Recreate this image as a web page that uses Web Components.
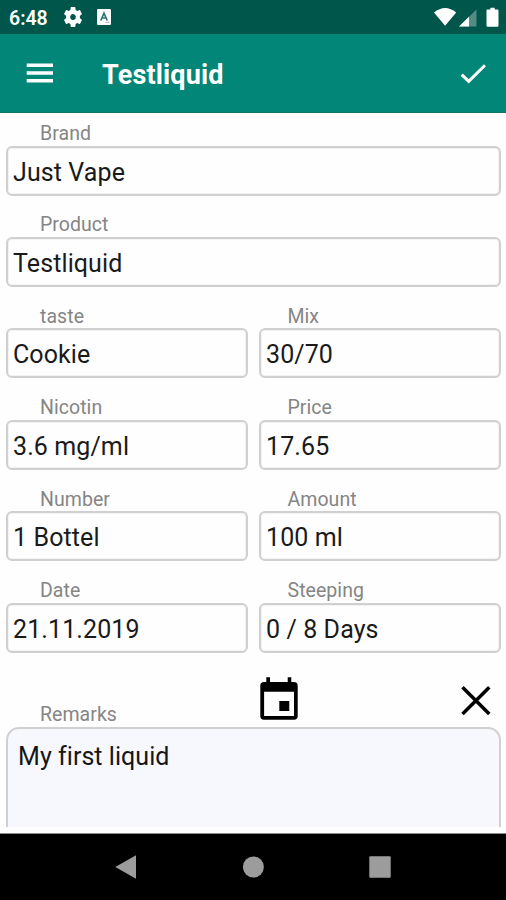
<!DOCTYPE html>
<html lang="en">
<head>
<meta charset="utf-8">
<title>Testliquid</title>
<style>
html, body {
  margin: 0;
  height: 100%;
  overflow: hidden;
  background: #fefefe;
}
body {
  font-family: Roboto, "Noto Sans", sans-serif;
}
</style>
</head>
<body>
<liquid-screen>
  <status-bar slot="top" time="6:48"></status-bar>
  <app-bar slot="top">Testliquid</app-bar>

  <liquid-field class="wide" label="Brand">Just Vape</liquid-field>
  <liquid-field class="wide" label="Product">Testliquid</liquid-field>
  <liquid-field label="taste">Cookie</liquid-field>
  <liquid-field class="right" label="Mix">30/70</liquid-field>
  <liquid-field label="Nicotin">3.6 mg/ml</liquid-field>
  <liquid-field class="right" label="Price">17.65</liquid-field>
  <liquid-field label="Number">1 Bottel</liquid-field>
  <liquid-field class="right" label="Amount">100 ml</liquid-field>
  <liquid-field label="Date">21.11.2019</liquid-field>
  <liquid-field class="right" label="Steeping">0 / 8 Days</liquid-field>

  <remarks-area slot="remarks" label="Remarks">My first liquid</remarks-area>
  <nav-bar slot="bottom"></nav-bar>
</liquid-screen>

<script>
/**
 * Creates a template element from markup.
 */
const createTemplate = (html) => {
  const template = document.createElement('template')
  template.innerHTML = html
  return template
}

const screenTemplate = createTemplate(`
<style>
:host {
  display: flex;
  flex-direction: column;
  width: 506px;
  height: 900px;
  overflow: hidden;
}
.fields {
  display: grid;
  grid-template-columns: 242px 242px;
  grid-auto-rows: 91.4px;
  column-gap: 11px;
  height: 554px;
  padding: 0 5px 0 6px;
  flex: none;
}
::slotted(.wide) {
  grid-column: span 2;
}
::slotted(.right) {
  --label-indent: 28.5px;
}
</style>
<slot name="top"></slot>
<div class="fields"><slot></slot></div>
<slot name="remarks"></slot>
<slot name="bottom"></slot>
`)

customElements.define('liquid-screen',
  class extends HTMLElement {
    constructor () {
      super()

      this.attachShadow({ mode: 'open' })
        .appendChild(screenTemplate.content.cloneNode(true))
    }
  })

const statusTemplate = createTemplate(`
<style>
:host {
  display: flex;
  align-items: center;
  flex: none;
  box-sizing: border-box;
  height: 34px;
  padding: 0 7px 0 9px;
  background: #00564b;
  color: #fff;
}
.time {
  width: 55px;
  font-size: 19.5px;
  font-weight: 600;
  line-height: 34px;
  padding-top: 3px;
}
svg {
  display: block;
  fill: currentColor;
}
.gear {
  margin-right: 15px;
}
.signals {
  margin-left: auto;
}
</style>
<span class="time"></span>
<svg class="gear" width="18" height="20" viewBox="2.2 2 19.6 20" preserveAspectRatio="none"><path d="M19.43 12.98c.04-.32.07-.64.07-.98s-.03-.66-.07-.98l2.11-1.65c.19-.15.24-.42.12-.64l-2-3.46c-.12-.22-.39-.3-.61-.22l-2.49 1c-.52-.4-1.08-.73-1.69-.98l-.38-2.65C14.46 2.18 14.25 2 14 2h-4c-.25 0-.46.18-.49.42l-.38 2.65c-.61.25-1.17.59-1.69.98l-2.49-1c-.23-.09-.49 0-.61.22l-2 3.46c-.13.22-.07.49.12.64l2.11 1.65c-.04.32-.07.65-.07.98s.03.66.07.98l-2.11 1.65c-.19.15-.24.42-.12.64l2 3.46c.12.22.39.3.61.22l2.49-1c.52.4 1.08.73 1.69.98l.38 2.65c.03.24.24.42.49.42h4c.25 0 .46-.18.49-.42l.38-2.65c.61-.25 1.17-.59 1.69-.98l2.49 1c.23.09.49 0 .61-.22l2-3.46c.12-.22.07-.49-.12-.64l-2.11-1.65zM12 15.1c-1.7 0-3.1-1.4-3.1-3.1s1.4-3.1 3.1-3.1 3.1 1.4 3.1 3.1-1.4 3.1-3.1 3.1z"/></svg>
<svg width="14" height="16" viewBox="0 0 14 16">
  <rect width="14" height="16" rx="1.2"/>
  <path d="M3.8 11.5 7 4.2l3.2 7.3M5 9h4" fill="none" stroke="#31766e" stroke-width="1.7"/>
  <path d="M8.5 13.3h4" stroke="#8db4af"/>
</svg>
<svg class="signals" width="66" height="34" viewBox="433 0 66 34">
  <path d="M434 12.6Q445.1 3.4 456.2 12.6L445.1 25.7z"/>
  <path d="M476.5 9.5V26.6H459z" opacity=".32"/>
  <path d="M469 16.8V26.6H459z"/>
  <path d="M487.5 9.5h2.8V7.8h4.4v1.7h2.8q1 0 1 1V25.8q0 1-1 1h-10q-1 0-1-1V10.5q0-1 1-1z"/>
</svg>
`)

customElements.define('status-bar',
  class extends HTMLElement {
    constructor () {
      super()

      this.attachShadow({ mode: 'open' })
        .appendChild(statusTemplate.content.cloneNode(true))
      this.shadowRoot.querySelector('.time').textContent = this.getAttribute('time')
    }
  })

const appBarTemplate = createTemplate(`
<style>
:host {
  display: flex;
  align-items: center;
  flex: none;
  box-sizing: border-box;
  height: 79px;
  padding: 0 20px 0 26px;
  background: #028677;
  border-bottom: 1px solid #167266;
  color: #fff;
}
.title {
  flex: 1;
  margin-left: 48px;
  padding-top: 4px;
  font-size: 27px;
  font-weight: 700;
  line-height: 32px;
  letter-spacing: .15px;
}
svg {
  display: block;
}
</style>
<svg width="28" height="22" viewBox="0 0 28 22"><path d="M.7 3.2H27M.7 10.9H27M.7 18.7H27" stroke="#fff" stroke-width="3.5"/></svg>
<div class="title"><slot></slot></div>
<svg width="26" height="22" viewBox="460 62 26 22"><path d="M461.7 74.6 468.7 81.4 485 65.2" fill="none" stroke="#fff" stroke-width="3"/></svg>
`)

customElements.define('app-bar',
  class extends HTMLElement {
    constructor () {
      super()

      this.attachShadow({ mode: 'open' })
        .appendChild(appBarTemplate.content.cloneNode(true))
    }
  })

const fieldTemplate = createTemplate(`
<style>
:host {
  display: block;
}
.label {
  height: 32.7px;
  padding-left: var(--label-indent, 34px);
  box-sizing: border-box;
  padding-top: 9px;
  font-size: 19.5px;
  line-height: 24px;
  letter-spacing: .05px;
  color: #858585;
}
.box {
  box-sizing: border-box;
  height: 50px;
  padding-left: 5px;
  border: 2px solid #d0d0d0;
  border-radius: 6px;
  box-shadow: inset 0 0 0 1px #f3f3f3;
  font-size: 25px;
  line-height: 49px;
  letter-spacing: .1px;
  color: #1a1a1a;
  white-space: nowrap;
}
</style>
<div class="label"></div>
<div class="box"><slot></slot></div>
`)

customElements.define('liquid-field',
  class extends HTMLElement {
    constructor () {
      super()

      this.attachShadow({ mode: 'open' })
        .appendChild(fieldTemplate.content.cloneNode(true))
      this.shadowRoot.querySelector('.label').textContent = this.getAttribute('label')
    }
  })

const remarksTemplate = createTemplate(`
<style>
:host {
  display: flex;
  flex-direction: column;
  flex: none;
  box-sizing: border-box;
  height: 160px;
  padding: 0 5px 0 6px;
}
.head {
  display: flex;
  align-items: flex-start;
  flex: none;
  height: 60px;
  padding-left: 34px;
}
.label {
  width: 219px;
  padding-top: 36px;
  font-size: 19.5px;
  line-height: 24px;
  letter-spacing: .05px;
  color: #858585;
}
svg {
  display: block;
  padding-top: 9px;
}
.clear {
  margin-left: auto;
  margin-right: 10px;
}
.box {
  flex: 1;
  padding: 11px 0 0 10px;
  border: 2px solid #d0d0d1;
  border-bottom: 0;
  border-radius: 13px 13px 0 0;
  background: #f7f8fd;
  font-size: 25px;
  line-height: 34px;
  letter-spacing: .05px;
  color: #161616;
}
</style>
<div class="head">
  <div class="label"></div>
  <svg width="40" height="45" viewBox="259 676 40 45">
    <path fill-rule="evenodd" d="M266.3 677.3h3.7V682h17.7v-4.7h3.6V682h2.7q3.7 0 3.7 3.7V716q0 3.8-3.7 3.8H264q-3.7 0-3.7-3.8V685.7q0-3.7 3.7-3.7h2.3zM264.1 691.7V716H294V691.7z"/>
    <path d="M279.3 701h10v10h-10z"/>
  </svg>
  <svg class="clear" width="31" height="45" viewBox="460 676 31 45"><path d="M462.5 687.3 489.3 714M489.3 687.3 462.5 714" stroke="#000" stroke-width="3.5"/></svg>
</div>
<div class="box"><slot></slot></div>
`)

customElements.define('remarks-area',
  class extends HTMLElement {
    constructor () {
      super()

      this.attachShadow({ mode: 'open' })
        .appendChild(remarksTemplate.content.cloneNode(true))
      this.shadowRoot.querySelector('.label').textContent = this.getAttribute('label')
    }
  })

const navTemplate = createTemplate(`
<style>
:host {
  display: flex;
  justify-content: space-between;
  align-items: center;
  flex: none;
  box-sizing: border-box;
  height: 67px;
  margin-top: auto;
  padding: 0 115px;
  border-top: 1px solid #8b8b88;
  background: #000;
}
svg {
  display: block;
  fill: #9c9c9c;
}
</style>
<svg width="22" height="24" viewBox="0 0 22 24"><path d="M.3 12 21 .3v23.4z"/></svg>
<svg width="22" height="22" viewBox="0 0 22 22"><circle cx="11.4" cy="11" r="10.5"/></svg>
<svg width="22" height="22" viewBox="0 0 22 22"><rect x=".3" y=".2" width="21.4" height="21.6" rx="1"/></svg>
`)

customElements.define('nav-bar',
  class extends HTMLElement {
    constructor () {
      super()

      this.attachShadow({ mode: 'open' })
        .appendChild(navTemplate.content.cloneNode(true))
    }
  })
</script>
</body>
</html>
